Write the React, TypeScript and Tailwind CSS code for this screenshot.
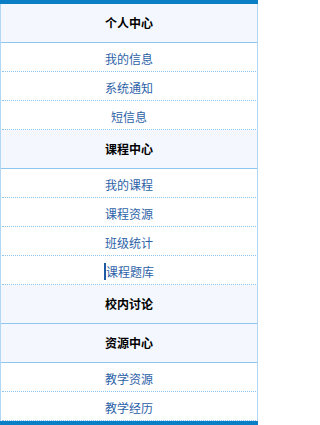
import React from 'react'

type Section = {
    title: string
    items: string[]
}

const sections: Section[] = [
    { title: '个人中心', items: ['我的信息', '系统通知', '短信息'] },
    { title: '课程中心', items: ['我的课程', '课程资源', '班级统计', '课程题库'] },
    { title: '校内讨论', items: [] },
    { title: '资源中心', items: ['教学资源', '教学经历'] },
]

const active = '课程题库'

export default function App() {
    return (
        <div
            className="w-[258px] h-[425px] bg-white overflow-hidden"
            style={{ fontFamily: '"Noto Sans CJK SC", "Noto Sans", sans-serif' }}
        >
            <div className="h-[4px] bg-[#0a7fc6]" />
            <div className="border-x border-[#b3d6f3]">
                {sections.map((section) => (
                    <div key={section.title}>
                        <div className="h-[39px] bg-[#f4f8fe] border-b border-[#8fc6ef] flex items-center justify-center text-[12px] font-bold text-black">
                            {section.title}
                        </div>
                        {section.items.map((item) => (
                            <div
                                key={item}
                                className="h-[29px] mx-[1px] border-b border-dotted border-[#8cc4ee] flex items-center justify-center pt-[2px] text-[12px] text-[#2d62a8]"
                            >
                                <span
                                    className={
                                        item === active
                                            ? 'border-l-2 border-[#1f5aa6] leading-[17px]'
                                            : 'leading-[17px]'
                                    }
                                >
                                    {item}
                                </span>
                            </div>
                        ))}
                    </div>
                ))}
            </div>
            <div className="h-[4px] bg-[#0a7fc6]" />
        </div>
    )
}
